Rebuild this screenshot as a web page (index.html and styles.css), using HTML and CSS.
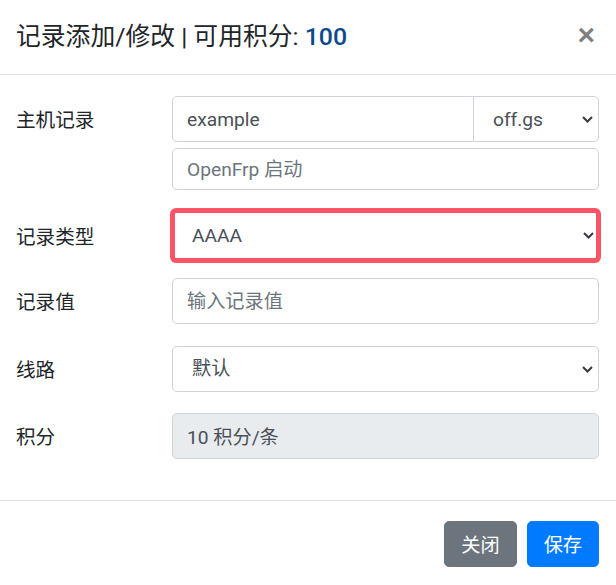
FILE: index.html
```html
<!DOCTYPE html>
<html lang="zh">
<head>
<meta charset="utf-8">
<title>记录添加/修改</title>
<link rel="stylesheet" href="styles.css">
</head>
<body>
<div class="modal">
  <div class="modal-header">
    <h5 class="modal-title">记录添加/修改 | 可用积分: <span class="points">100</span></h5>
    <button class="close" type="button">×</button>
  </div>
  <div class="modal-body">
    <div class="form-row">
      <label class="col-label">主机记录</label>
      <div class="field">
        <div class="input-group">
          <input class="form-control group-input" type="text" value="example">
          <span class="select-wrap group-select">
            <select class="form-select"><option>off.gs</option></select>
            <svg class="chev" width="11" height="7" viewBox="0 0 11 7"><path d="M1 1l4.5 4.5L10 1" fill="none" stroke="#343a40" stroke-width="2"/></svg>
          </span>
        </div>
        <input class="form-control sub-input" type="text" placeholder="OpenFrp 启动">
      </div>
    </div>
    <div class="form-row row-invalid">
      <label class="col-label">记录类型</label>
      <div class="field">
        <span class="select-wrap">
          <select class="form-select select-invalid"><option>AAAA</option></select>
          <svg class="chev chev-invalid" width="11" height="7" viewBox="0 0 11 7"><path d="M1 1l4.5 4.5L10 1" fill="none" stroke="#343a40" stroke-width="2"/></svg>
        </span>
      </div>
    </div>
    <div class="form-row">
      <label class="col-label">记录值</label>
      <div class="field">
        <input class="form-control" type="text" placeholder="输入记录值">
      </div>
    </div>
    <div class="form-row">
      <label class="col-label">线路</label>
      <div class="field">
        <span class="select-wrap">
          <select class="form-select"><option>默认</option></select>
          <svg class="chev" width="11" height="7" viewBox="0 0 11 7"><path d="M1 1l4.5 4.5L10 1" fill="none" stroke="#343a40" stroke-width="2"/></svg>
        </span>
      </div>
    </div>
    <div class="form-row last">
      <label class="col-label">积分</label>
      <div class="field">
        <input class="form-control readonly" type="text" value="10 积分/条" readonly>
      </div>
    </div>
  </div>
  <div class="modal-footer">
    <button class="btn btn-secondary" type="button">关闭</button>
    <button class="btn btn-primary" type="button">保存</button>
  </div>
</div>
</body>
</html>
```

FILE: styles.css
```css
* { box-sizing: border-box; }
html, body { margin: 0; padding: 0; background: #fff; }
body {
  font-family: Roboto, "Noto Sans CJK SC", sans-serif;
  font-size: 19.2px;
  color: #212529;
}
.modal { width: 616px; background: #fff; }
.modal-header {
  height: 75px;
  padding: 0 17px 0 16px;
  border-bottom: 1px solid #dee2e6;
  display: flex;
  align-items: center;
  justify-content: space-between;
}
.modal-title {
  margin: 0;
  font-size: 24.8px;
  font-weight: 400;
  line-height: 1.5;
  color: #212529;
}
.points { color: #0b4a8c; font-weight: 500; }
.close {
  border: 0;
  background: transparent;
  padding: 0 4px;
  font-family: "Liberation Sans", sans-serif;
  font-size: 30px;
  font-weight: 700;
  line-height: 1;
  color: #000;
  opacity: .5;
  margin-top: -4px;
}
.modal-body { padding: 21px 17px 41px 16px; }
.form-row { display: flex; align-items: flex-start; margin-bottom: 21.5px; }
.form-row.last { margin-bottom: 0; }
.row-invalid { margin-top: -2px; margin-bottom: 17.5px; }
.col-label {
  width: 156px;
  flex: none;
  font-size: 19.6px;
  line-height: 46px;
  height: 46px;
  padding-top: 2px;
}
.row-invalid .col-label { line-height: 51px; height: 51px; }
.field { flex: 1; display: flex; flex-direction: column; }
.form-control {
  display: block;
  width: 100%;
  height: 46px;
  padding: 0 14px;
  font: inherit;
  color: #495057;
  background: #fff;
  border: 1px solid #ced4da;
  border-radius: 5px;
  outline: none;
}
.form-control::placeholder { color: #6c757d; opacity: 1; }
.form-control.readonly { background: #e9ecef; color: #495057; }
.input-group { display: flex; }
.group-input { flex: 1; border-top-right-radius: 0; border-bottom-right-radius: 0; }
.sub-input { margin-top: 6px; height: 42px; }
.select-wrap { position: relative; display: block; }
.group-select { width: 125px; flex: none; }
.form-select {
  display: block;
  width: 100%;
  height: 46px;
  padding: 0 30px 0 19px;
  font: inherit;
  color: #495057;
  background: #fff;
  border: 1px solid #ced4da;
  border-radius: 5px;
  appearance: none;
  -webkit-appearance: none;
  outline: none;
}
.group-select .form-select {
  margin-left: -1px;
  width: calc(100% + 1px);
  border-top-left-radius: 0;
  border-bottom-left-radius: 0;
}
.select-invalid {
  height: 51px;
  border: 3px solid #fb5466;
  box-shadow: 0 0 0 2px #fb5466;
  border-radius: 4px;
  padding-left: 17px;
}
.chev {
  position: absolute;
  right: 6px;
  top: 50%;
  margin-top: -3px;
  pointer-events: none;
}
.chev-invalid { right: 5px; }
.modal-footer {
  border-top: 1px solid #dee2e6;
  padding: 20px 17px 18px;
  display: flex;
  justify-content: flex-end;
  gap: 10px;
}
.btn {
  height: 46px;
  padding: 0 16px;
  font: inherit;
  color: #fff;
  border: 1px solid transparent;
  border-radius: 5px;
}
.btn-secondary { background: #6c757d; border-color: #6c757d; }
.btn-primary { background: #007bff; border-color: #007bff; }
```
